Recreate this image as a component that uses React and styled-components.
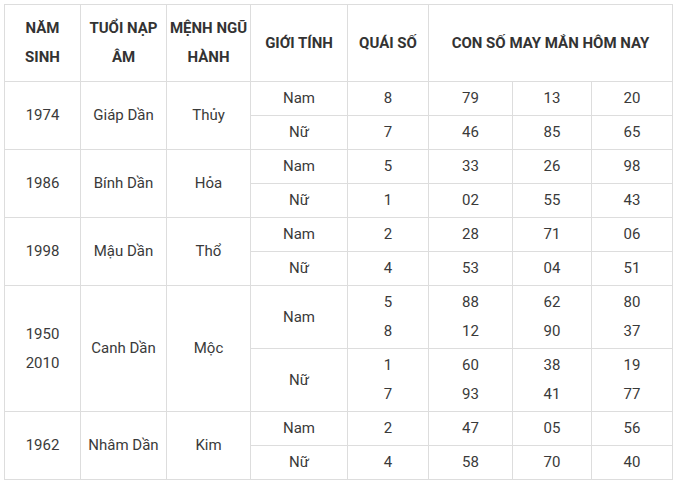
import React from 'react';
import styled, { createGlobalStyle } from 'styled-components';

const GlobalStyle = createGlobalStyle`
	body {
		margin: 0;
		background: #fff;
		font-family: Roboto, "Liberation Sans", Arial, sans-serif;
	}
`;

const Page = styled.div`
	padding: 4px 0 0 4px;
`;

const Table = styled.table`
	border-collapse: collapse;
	table-layout: fixed;
	width: 669px;
	color: #333;
	font-size: 15px;
`;

const Th = styled.th`
	border: 1px solid #ddd;
	padding: 9px 2px;
	line-height: 29px;
	font-weight: 700;
	text-align: center;
	vertical-align: middle;
	color: #333;
`;

const Td = styled.td`
	border: 1px solid #ddd;
	padding: 2px 2px;
	line-height: 29px;
	text-align: center;
	vertical-align: middle;
	color: #3a3a3a;
`;

const widths = [76, 86, 84, 97, 81, 84, 79, 81];

const data = [
	{
		year: ['1974'],
		tuoi: 'Giáp Dần',
		menh: 'Thủy',
		rows: [
			{ gender: 'Nam', quai: ['8'], nums: [['79'], ['13'], ['20']] },
			{ gender: 'Nữ', quai: ['7'], nums: [['46'], ['85'], ['65']] },
		],
	},
	{
		year: ['1986'],
		tuoi: 'Bính Dần',
		menh: 'Hỏa',
		rows: [
			{ gender: 'Nam', quai: ['5'], nums: [['33'], ['26'], ['98']] },
			{ gender: 'Nữ', quai: ['1'], nums: [['02'], ['55'], ['43']] },
		],
	},
	{
		year: ['1998'],
		tuoi: 'Mậu Dần',
		menh: 'Thổ',
		rows: [
			{ gender: 'Nam', quai: ['2'], nums: [['28'], ['71'], ['06']] },
			{ gender: 'Nữ', quai: ['4'], nums: [['53'], ['04'], ['51']] },
		],
	},
	{
		year: ['1950', '2010'],
		tuoi: 'Canh Dần',
		menh: 'Mộc',
		rows: [
			{ gender: 'Nam', quai: ['5', '8'], nums: [['88', '12'], ['62', '90'], ['80', '37']] },
			{ gender: 'Nữ', quai: ['1', '7'], nums: [['60', '93'], ['38', '41'], ['19', '77']] },
		],
	},
	{
		year: ['1962'],
		tuoi: 'Nhâm Dần',
		menh: 'Kim',
		rows: [
			{ gender: 'Nam', quai: ['2'], nums: [['47'], ['05'], ['56']] },
			{ gender: 'Nữ', quai: ['4'], nums: [['58'], ['70'], ['40']] },
		],
	},
];

const Lines = ({ items }) =>
	items.map((t, i) => (
		<React.Fragment key={i}>
			{i > 0 && <br />}
			{t}
		</React.Fragment>
	));

function App() {
	return (
		<Page>
			<GlobalStyle />
			<Table>
				<colgroup>
					{widths.map((w, i) => (
						<col key={i} style={{ width: w }} />
					))}
				</colgroup>
				<thead>
					<tr>
						<Th>
							NĂM
							<br />
							SINH
						</Th>
						<Th>
							TUỔI NẠP
							<br />
							ÂM
						</Th>
						<Th>
							MỆNH NGŨ
							<br />
							HÀNH
						</Th>
						<Th>GIỚI TÍNH</Th>
						<Th>QUÁI SỐ</Th>
						<Th colSpan={3}>CON SỐ MAY MẮN HÔM NAY</Th>
					</tr>
				</thead>
				<tbody>
					{data.map((block) =>
						block.rows.map((row, ri) => (
							<tr key={block.tuoi + ri}>
								{ri === 0 && (
									<>
										<Td rowSpan={2}>
											<Lines items={block.year} />
										</Td>
										<Td rowSpan={2}>{block.tuoi}</Td>
										<Td rowSpan={2}>{block.menh}</Td>
									</>
								)}
								<Td>{row.gender}</Td>
								<Td>
									<Lines items={row.quai} />
								</Td>
								{row.nums.map((n, ni) => (
									<Td key={ni}>
										<Lines items={n} />
									</Td>
								))}
							</tr>
						))
					)}
				</tbody>
			</Table>
		</Page>
	);
}

export default App;
